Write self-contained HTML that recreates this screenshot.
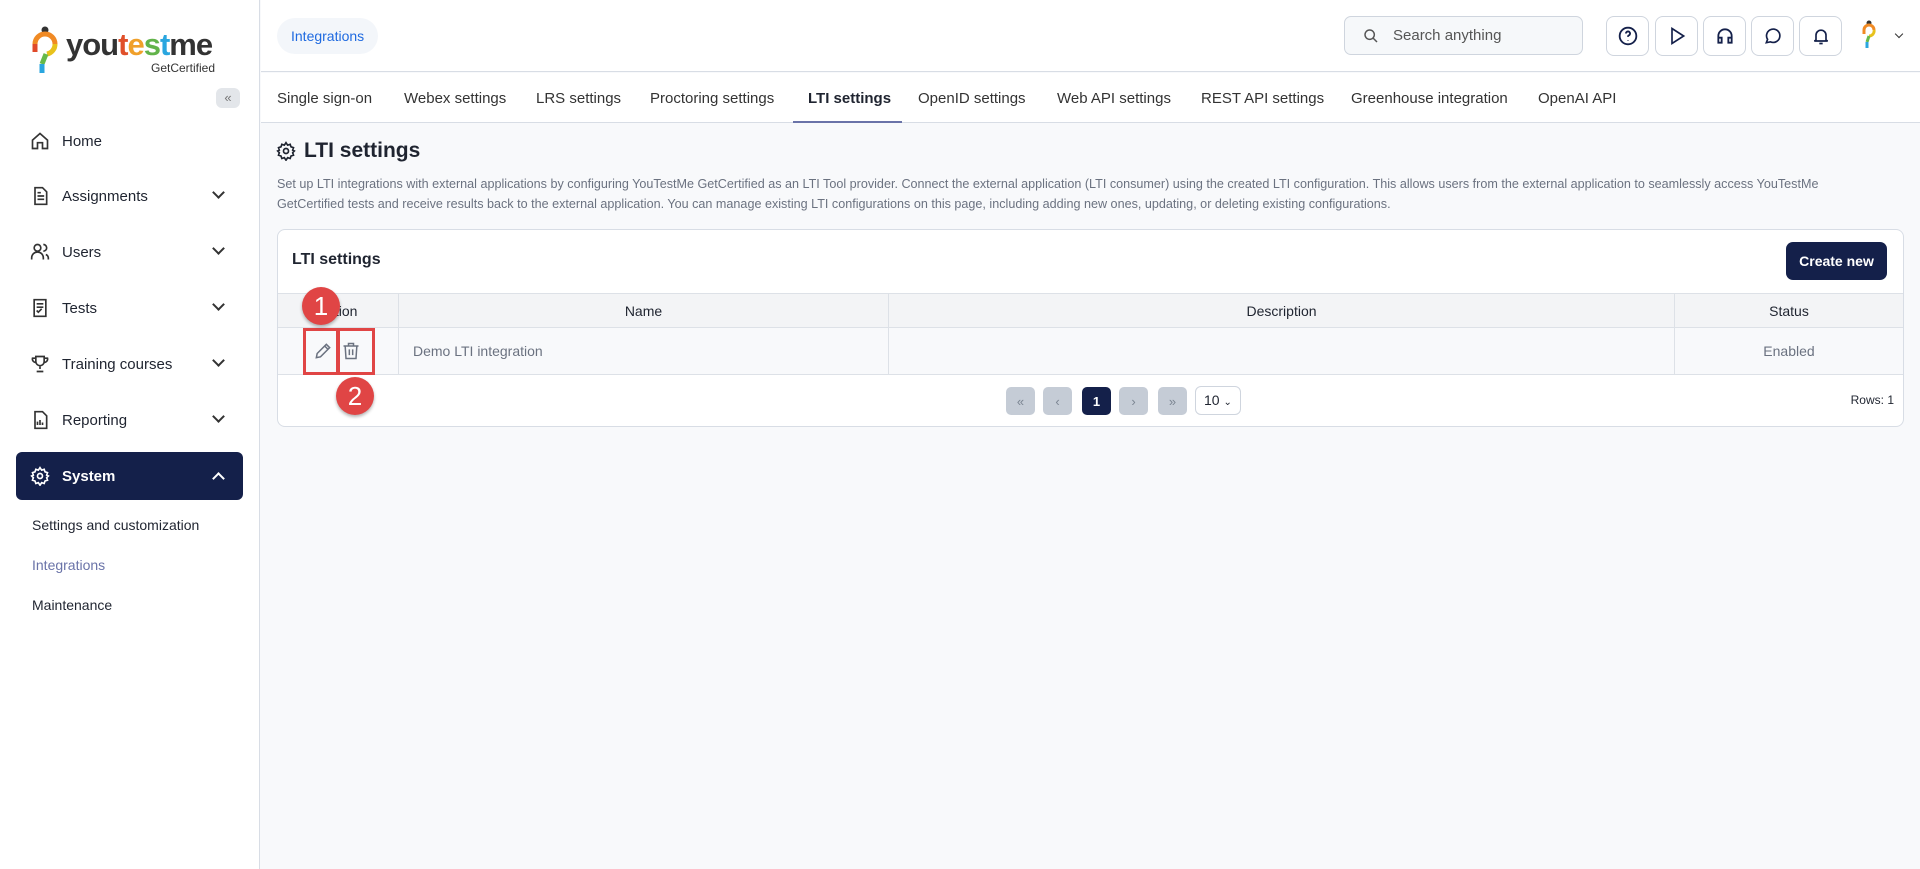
<!DOCTYPE html>
<html><head><meta charset="utf-8"><style>
*{box-sizing:border-box;margin:0;padding:0}
body{width:1920px;height:869px;overflow:hidden;font-family:"Liberation Sans",sans-serif;background:#f8f9fb;color:#1f2430;position:relative}
.sb{position:absolute;left:0;top:0;width:260px;height:869px;background:#fff;border-right:1px solid #d8dde5}
.nav{position:absolute;left:30px;font-size:15px;color:#1f2430;display:flex;align-items:center}
.nav svg{margin-right:12px}
.chev{position:absolute;left:214px;width:9px;height:9px;border-right:2px solid #333;border-bottom:2px solid #333;transform:rotate(45deg)}
.hdr{position:absolute;left:261px;top:0;right:0;height:72px;background:#fff;border-bottom:1px solid #d8dde5}
.tabs{position:absolute;left:261px;top:73px;right:0;height:50px;background:#fff;border-bottom:1px solid #d8dde5}
.tab{position:absolute;top:17px;font-size:15px;color:#333}
.ib{position:absolute;top:16px;width:43px;height:40px;border:1px solid #cfd5de;border-radius:8px;background:#fff;display:flex;align-items:center;justify-content:center}
.card{position:absolute;left:277px;top:229px;width:1627px;height:198px;background:#fff;border:1px solid #d8dde5;border-radius:8px}
.th{position:absolute;top:293px;height:35px;background:#f3f4f6;border-top:1px solid #dde1e7;border-bottom:1px solid #dde1e7;border-right:1px solid #dde1e7;font-size:14px;display:flex;align-items:center;justify-content:center}
.td{position:absolute;top:328px;height:47px;background:#f8f9fb;border-bottom:1px solid #dde1e7;border-right:1px solid #dde1e7;font-size:14px;color:#6b7280;display:flex;align-items:center}
.pb{position:absolute;top:387px;width:29px;height:28px;border-radius:5px;background:#c5ccd6;color:#7b8592;font-size:13px;display:flex;align-items:center;justify-content:center}
.badge{position:absolute;width:38px;height:38px;border-radius:50%;background:#e04545;color:#fff;font-size:26px;display:flex;align-items:center;justify-content:center;box-shadow:0 2px 3px rgba(0,0,0,.3)}
.rb{position:absolute;border:3px solid #e04545}
</style></head><body>
<div class="sb">
 <div style="position:absolute;left:32px;top:26px">
  <svg width="26" height="48" viewBox="0 0 26 48"><circle cx="13" cy="4" r="3.5" fill="#333"/><path d="M3 26 V18 a10 10 0 0 1 20 0" stroke="#f08a24" stroke-width="5" fill="none"/><path d="M23 18 a10 10 0 0 1 -8 10" stroke="#e8c21c" stroke-width="5" fill="none"/><path d="M14 28 L10 38" stroke="#66b94a" stroke-width="5"/><path d="M10 38 L10 47" stroke="#2aa6df" stroke-width="5"/><path d="M3 18 V26" stroke="#e04a2a" stroke-width="5"/></svg>
 </div>
 <div style="position:absolute;left:66px;top:27px;font-size:31px;font-weight:bold;letter-spacing:-1px;color:#333">you<span style="color:#e0502a">t</span><span style="color:#f0a02a">e</span><span style="color:#62b34a">s</span><span style="color:#2aa6df">t</span>me</div>
 <div style="position:absolute;left:151px;top:61px;font-size:12px;color:#333">GetCertified</div>
 <div style="position:absolute;left:216px;top:88px;width:24px;height:20px;background:#e3e6ea;border-radius:6px;color:#777;font-size:13px;text-align:center;line-height:19px">«</div>
 <div class="nav" style="top:131px"><svg width="20" height="20" viewBox="0 0 24 24" fill="none" stroke="#333" stroke-width="2"><path d="M3 11l9-8 9 8v10h-6v-7H9v7H3z"/></svg>Home</div>
 <div class="nav" style="top:186px"><svg width="20" height="20" viewBox="0 0 24 24" fill="none" stroke="#333" stroke-width="2"><path d="M6 2h9l5 5v15H6z M9 12h8 M9 16h8 M9 8h4"/></svg>Assignments</div><div class="chev" style="top:188px"></div>
 <div class="nav" style="top:242px"><svg width="20" height="20" viewBox="0 0 24 24" fill="none" stroke="#333" stroke-width="2"><circle cx="9" cy="7" r="4"/><path d="M2 21v-2a6 6 0 0 1 14 0v2 M16 3a4 4 0 0 1 0 8 M22 21v-2a5 5 0 0 0-3-4"/></svg>Users</div><div class="chev" style="top:244px"></div>
 <div class="nav" style="top:298px"><svg width="20" height="20" viewBox="0 0 24 24" fill="none" stroke="#333" stroke-width="2"><path d="M5 2h14v20H5z M8 7h8 M8 11h8 M8 15l2 2 4-4"/></svg>Tests</div><div class="chev" style="top:300px"></div>
 <div class="nav" style="top:354px"><svg width="20" height="20" viewBox="0 0 24 24" fill="none" stroke="#333" stroke-width="2"><path d="M7 3h10v6a5 5 0 0 1-10 0z M7 5H3a4 4 0 0 0 4 5 M17 5h4a4 4 0 0 1-4 5 M12 14v4 M8 21h8"/></svg>Training courses</div><div class="chev" style="top:356px"></div>
 <div class="nav" style="top:410px"><svg width="20" height="20" viewBox="0 0 24 24" fill="none" stroke="#333" stroke-width="2"><path d="M6 2h9l5 5v15H6z M9 18v-4 M12 18v-6 M15 18v-3"/></svg>Reporting</div><div class="chev" style="top:412px"></div>
 <div style="position:absolute;left:16px;top:452px;width:227px;height:48px;background:#14204a;border-radius:6px"></div>
 <div class="nav" style="top:466px;color:#fff;font-weight:bold"><svg width="20" height="20" viewBox="0 0 24 24" fill="none" stroke="#fff" stroke-width="2"><circle cx="12" cy="12" r="3"/><path d="M12 2l2 3 3-1 1 3 3 1-1 3 2 1-2 2 1 3-3 1-1 3-3-1-2 3-2-3-3 1-1-3-3-1 1-3-2-2 2-1-1-3 3-1 1-3 3 1z"/></svg>System</div>
 <div class="chev" style="top:474px;border-color:#fff;transform:rotate(225deg)"></div>
 <div style="position:absolute;left:32px;top:517px;font-size:14px">Settings and customization</div>
 <div style="position:absolute;left:32px;top:557px;font-size:14px;color:#6a73a8">Integrations</div>
 <div style="position:absolute;left:32px;top:597px;font-size:14px">Maintenance</div>
</div>
<div class="hdr">
 <div style="position:absolute;left:16px;top:18px;height:36px;padding:0 14px;background:#f3f6fa;border-radius:18px;color:#1f6ae0;font-size:14px;line-height:36px">Integrations</div>
 <div style="position:absolute;left:1083px;top:16px;width:239px;height:39px;border:1px solid #cfd5de;border-radius:7px;background:#f6f8fa;font-size:15px;color:#555;line-height:37px;padding-left:48px">
  <svg style="position:absolute;left:18px;top:11px" width="16" height="16" viewBox="0 0 24 24" fill="none" stroke="#555" stroke-width="2.2"><circle cx="10" cy="10" r="7"/><path d="M15 15l6 6"/></svg>Search anything</div>
 <div class="ib" style="left:1345px"><svg width="20" height="20" viewBox="0 0 24 24" fill="none" stroke="#14204a" stroke-width="2.2"><circle cx="12" cy="12" r="10"/><path d="M9.5 9a2.5 2.5 0 1 1 3 2.5c-.5.2-.5.8-.5 1.5 M12 17v.5"/></svg></div>
 <div class="ib" style="left:1394px"><svg width="20" height="20" viewBox="0 0 24 24" fill="none" stroke="#14204a" stroke-width="2"><path d="M6 3l14 9-14 9z"/></svg></div>
 <div class="ib" style="left:1442px"><svg width="20" height="20" viewBox="0 0 24 24" fill="none" stroke="#14204a" stroke-width="2.2"><path d="M4 18v-6a8 8 0 0 1 16 0v6 M4 14h4v6H4z M16 14h4v6h-4z"/></svg></div>
 <div class="ib" style="left:1490px"><svg width="20" height="20" viewBox="0 0 24 24" fill="none" stroke="#14204a" stroke-width="2"><path d="M4 20l1.5-4A8 8 0 1 1 9 19z"/></svg></div>
 <div class="ib" style="left:1538px"><svg width="20" height="20" viewBox="0 0 24 24" fill="none" stroke="#14204a" stroke-width="2"><path d="M6 17V11a6 6 0 0 1 12 0v6l2 1H4z M10 21h4"/></svg></div>
 <svg style="position:absolute;left:1601px;top:20px" width="14" height="30" viewBox="0 0 14 30"><circle cx="7" cy="3" r="2.5" fill="#333"/><path d="M2 14V10a5 5 0 0 1 10 0" stroke="#f08a24" stroke-width="3" fill="none"/><path d="M12 10a5 5 0 0 1-5 6" stroke="#e8c21c" stroke-width="3" fill="none"/><path d="M7 16l-2 6" stroke="#66b94a" stroke-width="3"/><path d="M5 22v6" stroke="#2aa6df" stroke-width="3"/></svg>
 <div style="position:absolute;left:1635px;top:31px;width:6px;height:6px;border-right:1.5px solid #333;border-bottom:1.5px solid #333;transform:rotate(45deg)"></div>
</div>
<div class="tabs">
 <div class="tab" style="left:16px">Single sign-on</div>
 <div class="tab" style="left:143px">Webex settings</div>
 <div class="tab" style="left:275px">LRS settings</div>
 <div class="tab" style="left:389px">Proctoring settings</div>
 <div class="tab" style="left:547px;font-weight:bold;color:#1f2430">LTI settings</div>
 <div style="position:absolute;left:532px;top:48px;width:109px;height:2px;background:#6a73a8"></div>
 <div class="tab" style="left:657px">OpenID settings</div>
 <div class="tab" style="left:796px">Web API settings</div>
 <div class="tab" style="left:940px">REST API settings</div>
 <div class="tab" style="left:1090px">Greenhouse integration</div>
 <div class="tab" style="left:1277px">OpenAI API</div>
</div>
<svg style="position:absolute;left:276px;top:141px" width="20" height="20" viewBox="0 0 24 24" fill="none" stroke="#1f2430" stroke-width="2"><circle cx="12" cy="12" r="3"/><path d="M12 2l2 3 3-1 1 3 3 1-1 3 2 1-2 2 1 3-3 1-1 3-3-1-2 3-2-3-3 1-1-3-3-1 1-3-2-2 2-1-1-3 3-1 1-3 3 1z"/></svg>
<div style="position:absolute;left:304px;top:139px;font-size:21px;font-weight:bold">LTI settings</div>
<div style="position:absolute;left:277px;top:175px;width:1605px;font-size:12.6px;color:#6b7280;line-height:19.5px">Set up LTI integrations with external applications by configuring YouTestMe GetCertified as an LTI Tool provider. Connect the external application (LTI consumer) using the created LTI configuration. This allows users from the external application to seamlessly access YouTestMe GetCertified tests and receive results back to the external application. You can manage existing LTI configurations on this page, including adding new ones, updating, or deleting existing configurations.</div>
<div class="card"></div>
<div style="position:absolute;left:292px;top:251px;font-size:16px;font-weight:bold">LTI settings</div>
<div style="position:absolute;left:1786px;top:242px;width:101px;height:38px;background:#14204a;border-radius:7px;color:#fff;font-size:14px;font-weight:bold;text-align:center;line-height:38px">Create new</div>
<div class="th" style="left:278px;width:121px">Action</div>
<div class="th" style="left:399px;width:490px">Name</div>
<div class="th" style="left:889px;width:786px">Description</div>
<div class="th" style="left:1675px;width:228px;border-right:none">Status</div>
<div class="td" style="left:278px;width:121px"></div>
<div class="td" style="left:399px;width:490px;padding-left:14px">Demo LTI integration</div>
<div class="td" style="left:889px;width:786px"></div>
<div class="td" style="left:1675px;width:228px;border-right:none;justify-content:center">Enabled</div>
<svg style="position:absolute;left:313px;top:341px" width="20" height="20" viewBox="0 0 24 24" fill="none" stroke="#6b7280" stroke-width="1.8"><path d="M4 20l1-5L16 4l4 4L9 19z M14 6l4 4"/></svg>
<svg style="position:absolute;left:341px;top:341px" width="20" height="20" viewBox="0 0 24 24" fill="none" stroke="#6b7280" stroke-width="1.8"><path d="M3 6h18 M9 6V3h6v3 M5 6l1 15h12l1-15 M10 10v7 M14 10v7"/></svg>
<div class="rb" style="left:303px;top:328px;width:36px;height:47px"></div>
<div class="rb" style="left:337px;top:328px;width:38px;height:47px"></div>
<div class="badge" style="left:302px;top:287px">1</div>
<div class="badge" style="left:336px;top:377px">2</div>
<div class="pb" style="left:1006px">«</div>
<div class="pb" style="left:1043px">‹</div>
<div class="pb" style="left:1082px;background:#14204a;color:#fff;font-weight:bold">1</div>
<div class="pb" style="left:1119px">›</div>
<div class="pb" style="left:1158px">»</div>
<div style="position:absolute;left:1195px;top:386px;width:46px;height:29px;border:1px solid #cfd5de;border-radius:6px;background:#fff;font-size:14px;line-height:27px;padding-left:8px">10 <span style="font-size:10px">⌄</span></div>
<div style="position:absolute;right:26px;top:393px;font-size:12px">Rows: 1</div>
</body></html>
